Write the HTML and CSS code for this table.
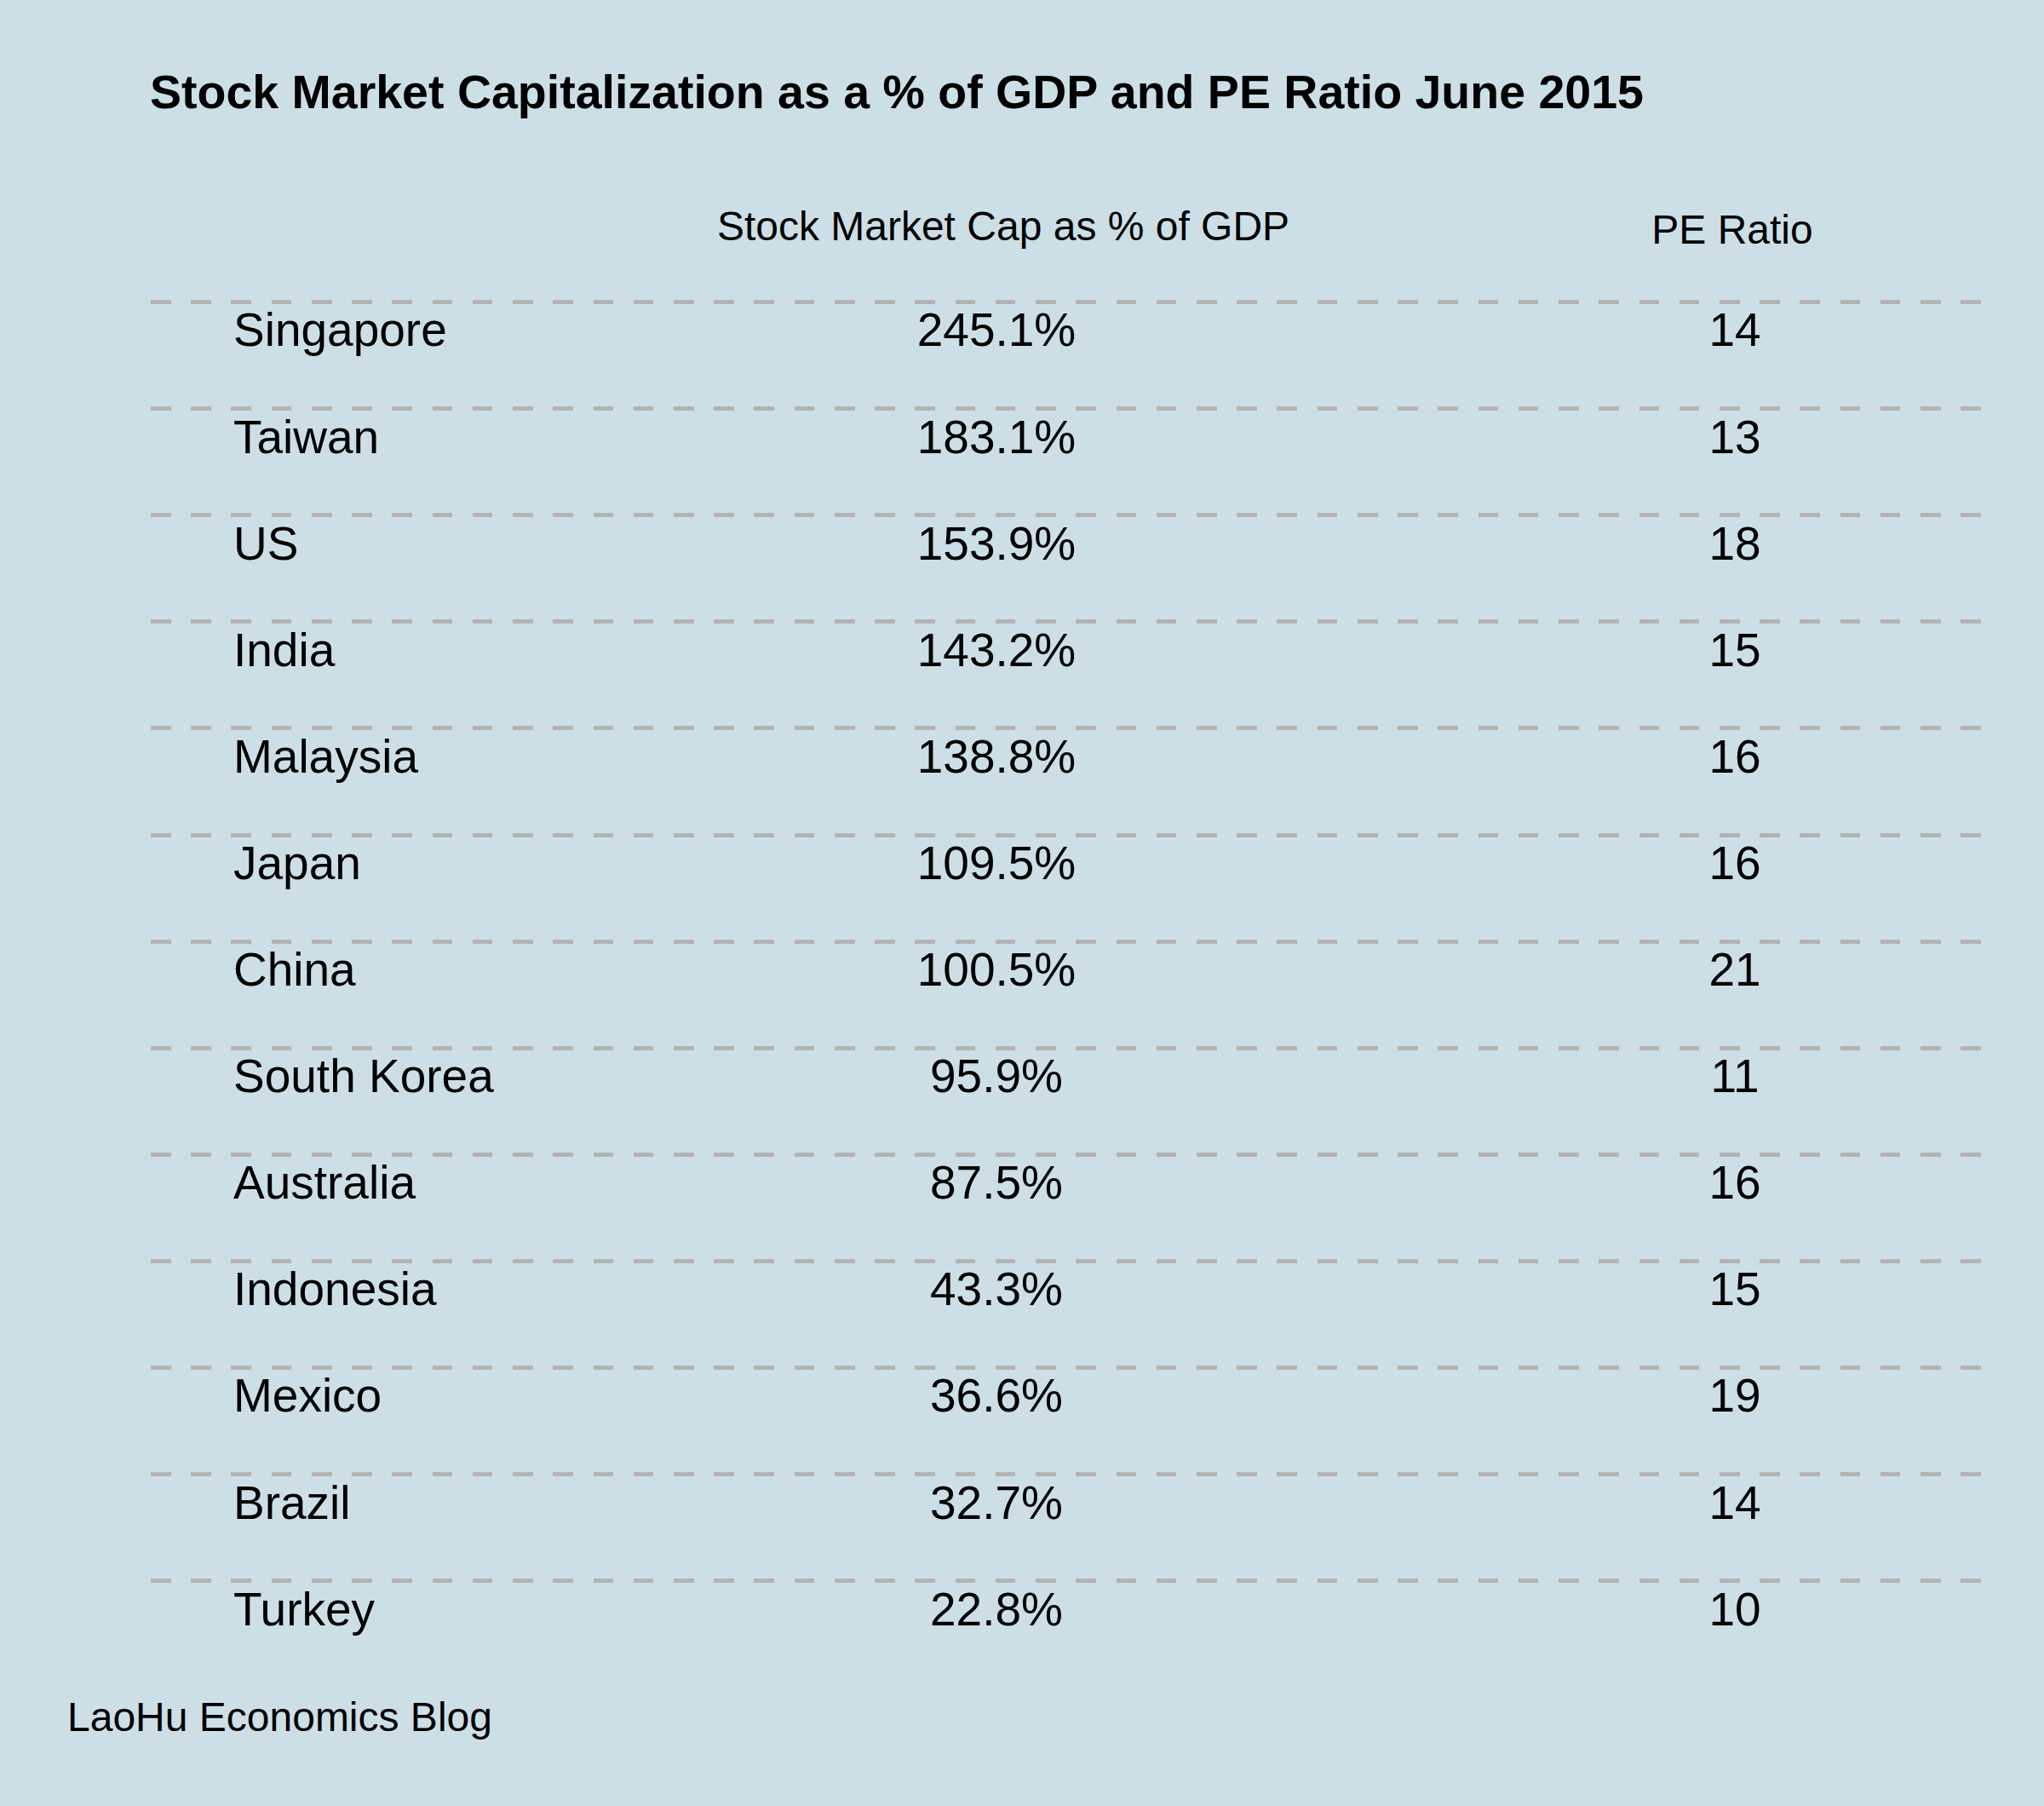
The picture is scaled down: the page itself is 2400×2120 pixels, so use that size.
FILE: index.html
```html
<!DOCTYPE html>
<html lang="en">
<head>
<meta charset="utf-8">
<title>Stock Market Capitalization as a % of GDP and PE Ratio June 2015</title>
<link rel="stylesheet" href="styles.css">
</head>
<body>
<main class="page">
  <h1 class="title">Stock Market Capitalization as a % of GDP and PE Ratio June 2015</h1>
  <section class="table">
    <div class="head">
      <div class="hcell"></div>
      <div class="hcell hcap">Stock Market Cap as % of GDP</div>
      <div class="hcell hpe">PE Ratio</div>
    </div>
    <div class="row"><div class="country">Singapore</div><div class="num">245.1%</div><div class="num">14</div></div>
    <div class="row"><div class="country">Taiwan</div><div class="num">183.1%</div><div class="num">13</div></div>
    <div class="row"><div class="country">US</div><div class="num">153.9%</div><div class="num">18</div></div>
    <div class="row"><div class="country">India</div><div class="num">143.2%</div><div class="num">15</div></div>
    <div class="row"><div class="country">Malaysia</div><div class="num">138.8%</div><div class="num">16</div></div>
    <div class="row"><div class="country">Japan</div><div class="num">109.5%</div><div class="num">16</div></div>
    <div class="row"><div class="country">China</div><div class="num">100.5%</div><div class="num">21</div></div>
    <div class="row"><div class="country">South Korea</div><div class="num">95.9%</div><div class="num">11</div></div>
    <div class="row"><div class="country">Australia</div><div class="num">87.5%</div><div class="num">16</div></div>
    <div class="row"><div class="country">Indonesia</div><div class="num">43.3%</div><div class="num">15</div></div>
    <div class="row"><div class="country">Mexico</div><div class="num">36.6%</div><div class="num">19</div></div>
    <div class="row"><div class="country">Brazil</div><div class="num">32.7%</div><div class="num">14</div></div>
    <div class="row"><div class="country">Turkey</div><div class="num">22.8%</div><div class="num">10</div></div>
  </section>
  <footer class="credit">LaoHu Economics Blog</footer>
</main>
</body>
</html>
```

FILE: styles.css
```css
html, body {
  margin: 0;
  padding: 0;
}

body {
  background: #cddfe6;
  color: #000;
  font-family: "Liberation Sans", Arial, Helvetica, sans-serif;
  width: 2400px;
  min-height: 2120px;
}

.page {
  display: flex;
  flex-direction: column;
  padding-top: 81px;
}

.title {
  margin: 0 0 0 176px;
  font-size: 55.5px;
  line-height: 55.5px;
  font-weight: bold;
}

.table {
  margin-top: 105px;
  margin-left: 177px;
  width: 2149px;
  display: flex;
  flex-direction: column;
}

.head {
  display: grid;
  grid-template-columns: 400px 1186px 548px;
  align-items: start;
  height: 110.6px;
  font-size: 48px;
  line-height: 48px;
}

.hcell {
  text-align: center;
  white-space: nowrap;
}

.hcap {
  padding-left: 16px;
}

.hpe {
  padding-top: 4px;
  padding-right: 6px;
}

.row {
  box-sizing: border-box;
  height: 125.1px;
  padding-top: 8.4px;
  display: grid;
  grid-template-columns: 400px 1186px 548px;
  align-items: start;
  font-size: 55px;
  line-height: 55px;
  background-image: repeating-linear-gradient(to right, #b3b3b3 0, #b3b3b3 23.6px, transparent 23.6px, transparent 47.23px);
  background-size: 100% 5px;
  background-repeat: no-repeat;
  background-position: left top;
}

.country {
  padding-left: 97px;
  white-space: nowrap;
}

.num {
  text-align: center;
  white-space: nowrap;
}

.credit {
  margin: 14px 0 0 79px;
  font-size: 48px;
  line-height: 48px;
}
```
